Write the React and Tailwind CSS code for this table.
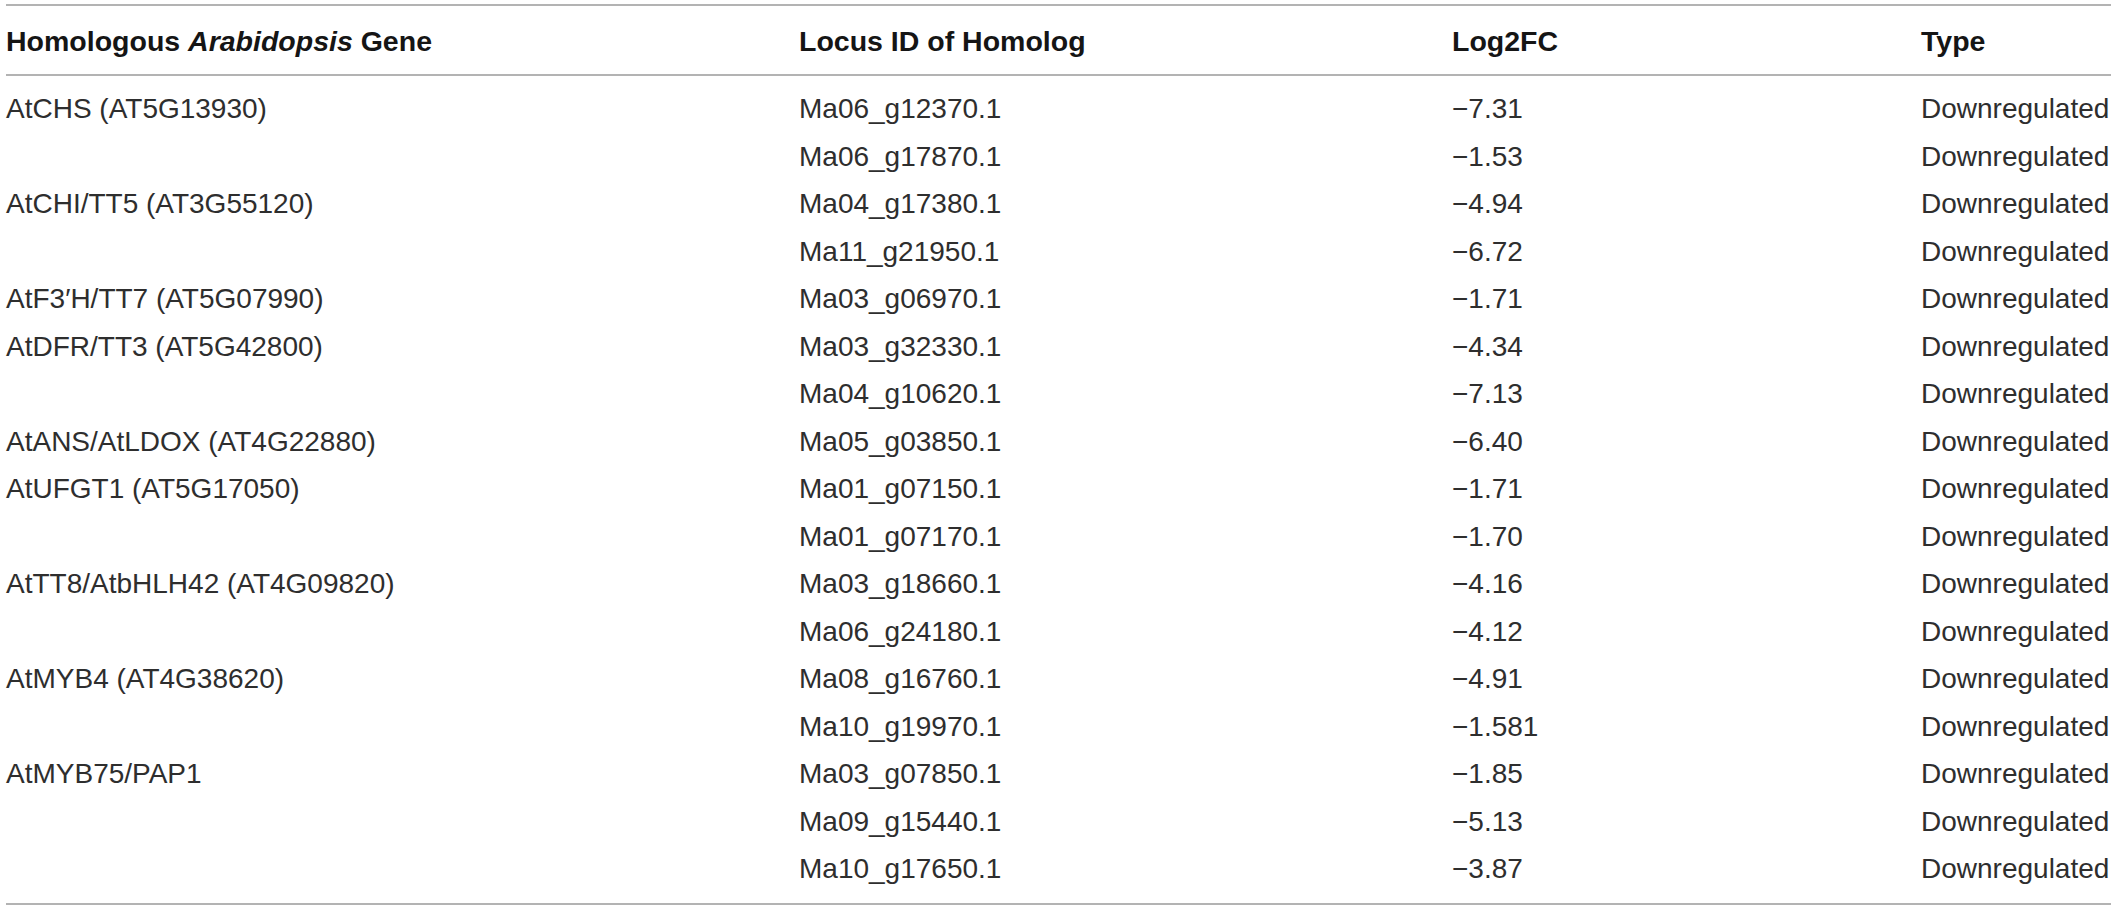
const rows = [
    ['AtCHS (AT5G13930)', 'Ma06_g12370.1', '\u22127.31'],
    ['', 'Ma06_g17870.1', '\u22121.53'],
    ['AtCHI/TT5 (AT3G55120)', 'Ma04_g17380.1', '\u22124.94'],
    ['', 'Ma11_g21950.1', '\u22126.72'],
    ['AtF3\u2032H/TT7 (AT5G07990)', 'Ma03_g06970.1', '\u22121.71'],
    ['AtDFR/TT3 (AT5G42800)', 'Ma03_g32330.1', '\u22124.34'],
    ['', 'Ma04_g10620.1', '\u22127.13'],
    ['AtANS/AtLDOX (AT4G22880)', 'Ma05_g03850.1', '\u22126.40'],
    ['AtUFGT1 (AT5G17050)', 'Ma01_g07150.1', '\u22121.71'],
    ['', 'Ma01_g07170.1', '\u22121.70'],
    ['AtTT8/AtbHLH42 (AT4G09820)', 'Ma03_g18660.1', '\u22124.16'],
    ['', 'Ma06_g24180.1', '\u22124.12'],
    ['AtMYB4 (AT4G38620)', 'Ma08_g16760.1', '\u22124.91'],
    ['', 'Ma10_g19970.1', '\u22121.581'],
    ['AtMYB75/PAP1', 'Ma03_g07850.1', '\u22121.85'],
    ['', 'Ma09_g15440.1', '\u22125.13'],
    ['', 'Ma10_g17650.1', '\u22123.87'],
];

const cols = 'grid grid-cols-[793px_653px_469px_1fr]';

export default function App() {
    return (
        <div className="min-h-screen bg-white pt-[4px] pl-[6px] pr-[7px] font-['Liberation_Sans',Arial,sans-serif] text-[28px]">
            <div className="border-t-2 border-b-2 border-[#b3b3b3]">
                {/* header */}
                <div className={`${cols} h-[70px] items-center leading-[70px] text-[28.5px] font-bold text-[#151515] border-b-2 border-[#b3b3b3]`}>
                    <div>Homologous <i>Arabidopsis</i> Gene</div>
                    <div>Locus ID of Homolog</div>
                    <div>Log2FC</div>
                    <div>Type</div>
                </div>
                <div className="pt-[9px] pb-[10px] text-[#2e2e2e]">
                    {rows.map((r, i) => (
                        <div key={i} className={`${cols} h-[47.5px] leading-[47.5px] whitespace-nowrap`}>
                            <div>{r[0]}</div>
                            <div>{r[1]}</div>
                            <div>{r[2]}</div>
                            <div>Downregulated</div>
                        </div>
                    ))}
                </div>
            </div>
        </div>
    );
}
